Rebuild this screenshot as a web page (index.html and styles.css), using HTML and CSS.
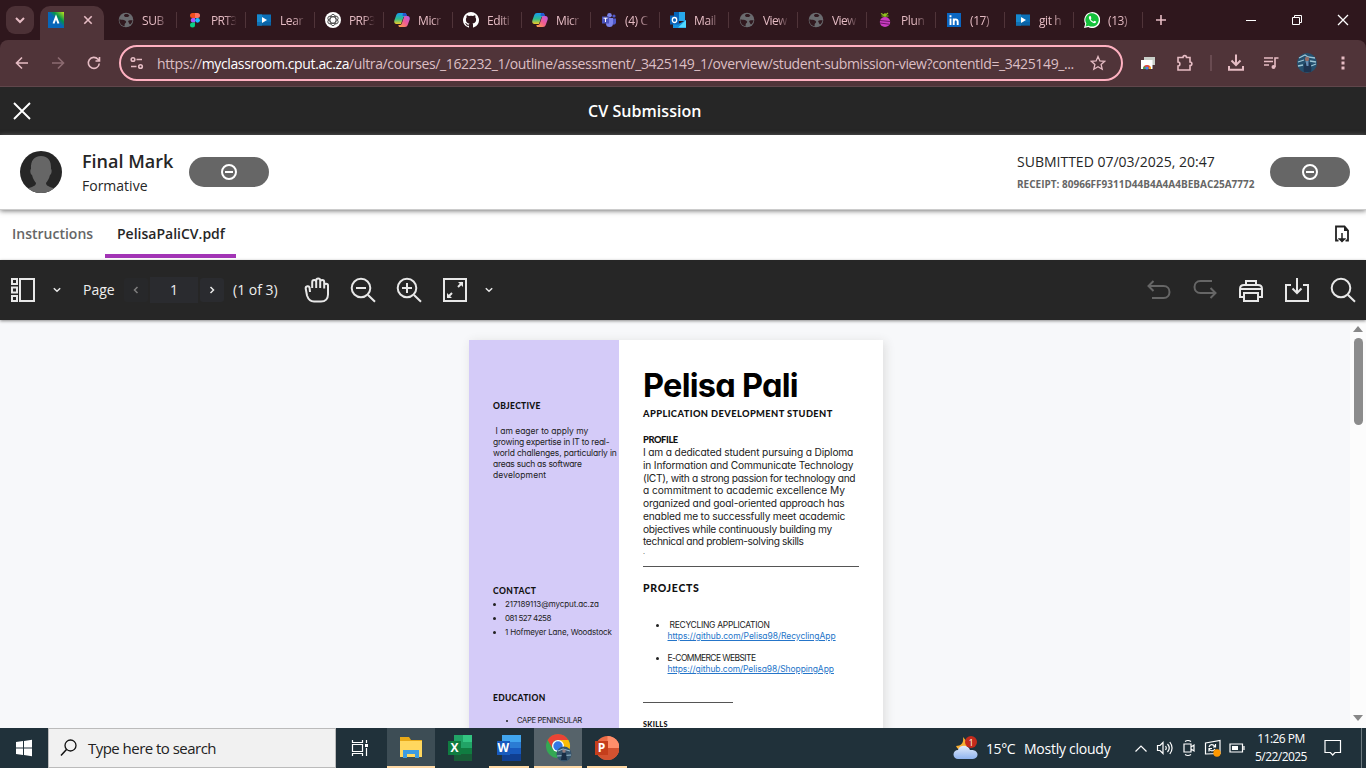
FILE: index.html
```html
<!DOCTYPE html>
<html lang="en">
<head>
<meta charset="utf-8">
<title>CV Submission</title>
<link rel="stylesheet" href="styles.css">
</head>
<body>
<svg class="defs" width="0" height="0">
  <defs>
    <linearGradient id="gA" x1="0" y1="1" x2="1" y2="0"><stop offset=".5" stop-color="#0866b8"/><stop offset=".68" stop-color="#079447"/><stop offset="1" stop-color="#c5e61b"/></linearGradient>
    <linearGradient id="gB" x1="0" y1="0" x2="0" y2="1"><stop offset="0" stop-color="#159df2"/><stop offset=".55" stop-color="#30bd8a"/><stop offset="1" stop-color="#f3cb25"/></linearGradient>
    <linearGradient id="gC" x1="1" y1="0" x2="0" y2="1"><stop offset="0" stop-color="#b65be8"/><stop offset=".5" stop-color="#ef5b93"/><stop offset="1" stop-color="#ffa83f"/></linearGradient>
    <linearGradient id="gD" x1="0" y1="0" x2="0" y2="1"><stop offset="0" stop-color="#e3ecfa"/><stop offset="1" stop-color="#8fb4f0"/></linearGradient>
  </defs>
  <symbol id="globe" viewBox="0 0 16 16"><circle cx="8" cy="8" r="7.300" fill="#6a6b6f"/><path d="M1.500 7.200C4 8 5.500 7.500 7 8.500s1.500 1.800.5 2.500-1 2-.8 3.200C3.500 14 1 11 1.500 7.200zM6.500 2.500c2.500-1 4 0 5 1L10 5H7.500C6 4.500 5.500 3.300 6.500 2.500zM10 9c1.500-1.500 3-.5 4.500-1-.2 2-1.200 3.500-2.500 4.500-1-.8-1.200-2-2-3.500z" fill="#31191f"/></symbol>
  <symbol id="learn" viewBox="0 0 16 16"><path d="M1 2.500h14v11H1z" fill="#0b6fb7"/><path d="M1 2.500h5v11H1z" fill="#1689cf"/><path d="M1 10h14v3.500H1z" fill="#0a5796" opacity=".5"/><path d="M6 5v6l5-3z" fill="#fff"/></symbol>
  <symbol id="copilot" viewBox="0 0 16 16"><path d="M5 1h5.500c1 0 1.500.7 1.800 1.600L13 5H9.500L7 12H2.500C.3 12-.2 10 .5 8l1.800-5C2.800 1.700 3.600 1 5 1z" fill="url(#gB)"/><path d="M10.500 4h3c2.200 0 2.700 2 2 4l-1.800 5c-.5 1.300-1.300 2-2.700 2H6c-1.200 0-1.700-.7-1.500-2H6c1 0 1.500-.5 1.800-1.400L9.800 5.500z" fill="url(#gC)"/><path d="M9 1h2c1 0 1.500 1 2 3H8.500z" fill="#2459cf"/></symbol>
</svg>
<div class="tabstrip">
  <div class="tabsearch"><svg width="12" height="12" viewBox="0 0 12 12"><path d="M2 4l4 4 4-4" class="ln w2"/></svg></div>
  <div class="tab-active">
    <svg width="16" height="16" viewBox="0 0 16 16"><path d="M0 0h16v16H0z" fill="url(#gA)"/><path d="M5.500 11.500 8 5l2.500 6.500" fill="none" stroke="#fff" stroke-width="2"/></svg>
    <svg width="10" height="10" viewBox="0 0 10 10"><path d="M1.300 1.300l7.400 7.400M8.700 1.300 1.300 8.700" class="ln"/></svg>
  </div>
  <div class="tabs">
    <div class="tab"><svg><use href="#globe"/></svg><span>SUB</span></div>
    <div class="tab"><svg viewBox="0 0 16 16"><path d="M5.500 1H8v5H5.500a2.500 2.500 0 010-5z" fill="#f24e1e"/><path d="M8 1h2.500a2.500 2.500 0 010 5H8z" fill="#ff7262"/><path d="M5.500 6H8v4.500H5.500a2.300 2.300 0 010-4.500z" fill="#a259ff"/><circle cx="10.500" cy="8.300" r="2.400" fill="#1abcfe"/><path d="M5.500 10.500H8V13a2.500 2.500 0 11-2.500-2.500z" fill="#0acf83"/></svg><span class="tight">PRT3</span></div>
    <div class="tab"><svg><use href="#learn"/></svg><span>Lear</span></div>
    <div class="tab"><svg viewBox="0 0 16 16"><circle cx="8" cy="8" r="8" fill="#fff"/><g fill="none" stroke="#333" stroke-width=".8"><ellipse cx="8" cy="8" rx="3" ry="5.700"/><ellipse cx="8" cy="8" rx="3" ry="5.700" transform="rotate(60 8 8)"/><ellipse cx="8" cy="8" rx="3" ry="5.700" transform="rotate(120 8 8)"/></g></svg><span class="tight">PRP3</span></div>
    <div class="tab"><svg><use href="#copilot"/></svg><span>Micr</span></div>
    <div class="tab"><svg viewBox="0 0 16 16"><path fill="#fff" d="M8 0a8 8 0 00-2.500 15.600c.4.100.500-.2.500-.4v-1.500c-2.200.5-2.700-1-2.700-1-.4-.9-.9-1.200-.9-1.200-.7-.5.100-.5.100-.5.800.100 1.200.8 1.200.8.700 1.300 1.900.9 2.300.7.100-.5.300-.9.500-1.100-1.800-.2-3.600-.9-3.600-4 0-.9.300-1.600.8-2.100-.1-.2-.4-1 .100-2.100 0 0 .7-.2 2.200.8a7.500 7.500 0 014 0c1.500-1 2.200-.8 2.200-.8.400 1.100.2 1.900.1 2.100.5.600.8 1.300.8 2.100 0 3.100-1.900 3.700-3.600 3.900.3.300.500.8.500 1.500v2.400c0 .2.100.5.500.4A8 8 0 008 0z"/></svg><span>Editi</span></div>
    <div class="tab"><svg><use href="#copilot"/></svg><span>Micr</span></div>
    <div class="tab"><svg viewBox="0 0 16 16"><circle cx="8.500" cy="3.200" r="2.300" fill="#7b83eb"/><circle cx="13" cy="4" r="1.600" fill="#5059c9"/><path d="M5 6h7v5.500a3.500 3.500 0 01-7 0z" fill="#7b83eb"/><path d="M12 6.500h3v4a2.200 2.200 0 01-3 2z" fill="#5059c9"/><path d="M1 4.500h7v7H1z" fill="#4b53bc"/><path d="M2.500 6.200h4M4.500 6v4" stroke="#fff" fill="none"/></svg><span>(4) C</span></div>
    <div class="tab"><svg viewBox="0 0 16 16"><path d="M4 0h11v9H4z" fill="#28a8ea"/><path d="M4 0h5v5H4z" fill="#0364b8"/><path d="M3 8l6.500 3.500L16 8v8H3z" fill="#1490df"/><path d="M16 8 8 15.500h8z" fill="#50d9ff"/><path d="M0 3.500h9v9H0z" fill="#0a62b7"/><ellipse cx="4.500" cy="8" rx="2.200" ry="2.500" fill="none" stroke="#fff" stroke-width="1.300"/></svg><span>Mail</span></div>
    <div class="tab"><svg><use href="#globe"/></svg><span class="tight">View</span></div>
    <div class="tab"><svg><use href="#globe"/></svg><span class="tight">View</span></div>
    <div class="tab"><svg viewBox="0 0 16 16"><path d="M4 1.500 8 3.500l3-2.500M8 1v4M4.500 4h7" stroke="#8fc31f" fill="none" stroke-width="1.200"/><ellipse cx="8" cy="10" rx="5.200" ry="5" fill="#cb3cc2"/><path d="M3 8.500l10 1M3 11l9 1.200" stroke="#6b1767"/></svg><span>Plun</span></div>
    <div class="tab"><svg viewBox="0 0 16 16"><rect x="1" y="1" width="14" height="14" fill="#0a66c2"/><path d="M4.500 6.500V13M4.500 3.300v2M7.700 13V6.500M7.700 10c0-3.400 4-3.400 4-.3V13" fill="none" stroke="#fff" stroke-width="1.900"/></svg><span>(17)</span></div>
    <div class="tab"><svg><use href="#learn"/></svg><span>git h</span></div>
    <div class="tab"><svg viewBox="0 0 16 16"><path d="M0 16l1.200-4.200A8 8 0 114.300 15z" fill="#fff"/><path d="M1.500 14.500l.9-3A6.700 6.700 0 114.700 13.700z" fill="#14c13b"/><path d="M5.700 4c-1.300 1-1 2.500.3 4.300 1.500 2 3.600 3.200 5 2.800 1-.4 1.400-1.300 1-1.600l-1.500-.8-1 1c-1.200-.4-2.300-1.400-2.800-2.500l.7-.9L6.700 4z" fill="#fff"/></svg><span>(13)</span></div>
  </div>
  <svg class="plus" width="12" height="12" viewBox="0 0 12 12"><path d="M6 1v10M1 6h10" class="ln"/></svg>
  <div class="winctl">
    <svg width="12" height="12"><path d="M1 6.500h10" stroke="#fff"/></svg>
    <svg width="12" height="12"><path d="M1.500 3.500h7v7h-7zM3.500 3.500v-2h7v7h-2" fill="none" stroke="#fff"/></svg>
    <svg width="12" height="12"><path d="M1 1l10 10M11 1 1 11" stroke="#fff" stroke-width="1.300"/></svg>
  </div>
</div>
<div class="toolbar">
  <div class="nav">
    <svg width="16" height="16" viewBox="0 0 16 16"><path d="M14 8H3M8 2.500 2.500 8 8 13.500" class="ln"/></svg>
    <svg class="dim" width="16" height="16" viewBox="0 0 16 16"><path d="M2 8h11M8 2.500 13.500 8 8 13.500" class="ln"/></svg>
    <svg width="16" height="16" viewBox="0 0 16 16"><path d="M13.300 8.500A5.500 5.500 0 1112 4.300l1.300 1.500M13.500 2v4h-4" class="ln"/></svg>
  </div>
  <div class="omni">
    <svg width="14" height="14" viewBox="0 0 14 14"><circle cx="3" cy="3.500" r="1.800" class="ln"/><path d="M6.500 3.500H12M1 10.500h5.500" class="ln"/><circle cx="10.500" cy="10.500" r="1.800" class="ln"/></svg>
    <span class="url">https://<b>myclassroom.cput.ac.za</b>/ultra/courses/_162232_1/outline/assessment/_3425149_1/overview/student-submission-view?contentId=_3425149_...</span>
    <svg width="16" height="16" viewBox="0 0 16 16"><path d="M8 1.500l1.900 4.400 4.800.4-3.600 3.200 1.100 4.700L8 11.700l-4.200 2.500 1.100-4.700L1.300 6.300l4.800-.4z" fill="none" stroke="#e6bcc4" stroke-width="1.300"/></svg>
  </div>
  <div class="exts">
    <svg width="16" height="16" viewBox="0 0 16 16"><path d="M4 2h11v8H4z" fill="#c9cfc9"/><path d="M1 5h11.500v9H1z" fill="#fff"/><path d="M3 14a4 4 0 018 0z" fill="#e34133"/><path d="M3 14a4 4 0 011.500-3L6 14z" fill="#34a853"/><path d="M9 14h2a4 4 0 00-1.300-2.900z" fill="#fbbc05"/><circle cx="7" cy="13" r="1.600" fill="#4285f4"/></svg>
    <svg class="puz" width="18" height="18" viewBox="0 0 18 18"><path d="M2 3.500h5c0-2.500 3.500-2.500 3.500 0H14V8c2.500 0 2.500 3.500 0 3.500V16H2v-4c2.500 0 2.500-4 0-4z" class="ln"/></svg>
    <i></i>
    <svg width="18" height="18" viewBox="0 0 18 18"><path d="M9 .5v10M4.500 6.500 9 11l4.500-4.500M2 12v3.800h14V12" class="ln w2"/></svg>
    <svg width="16" height="16" viewBox="0 0 16 16"><path d="M1 3h9M1 6.500h9M1 10h5M12 12V3h3.500" class="ln"/><circle cx="10.500" cy="12" r="2" fill="#e6bcc4"/></svg>
    <svg width="20" height="20" viewBox="0 0 20 20"><circle cx="10" cy="10" r="10" fill="#24506f"/><path d="M2 5l6-3 3 2 7 1M1 9l6-2M13 8l6 1M1 13l5-1M14 13l5-2" stroke="#9dc4d4" stroke-width="1.300" fill="none"/><path d="M7 19c-1-4 0-9 2-10h3c2 1 3 6 2 10z" fill="#1d3451"/><path d="M8.500 8h3v5h-2z" fill="#668eb5"/><circle cx="10" cy="6" r="2.200" fill="#936c66"/></svg>
    <svg class="dots" width="4" height="16" viewBox="0 0 4 16"><path d="M.5 1.500h3v3h-3zM.5 6.500h3v3h-3zM.5 11.500h3v3h-3z" fill="#e6bcc4"/></svg>
  </div>
</div>
<header class="title"><svg width="20" height="20" viewBox="0 0 20 20"><path d="M2 2l16 16M18 2 2 18" stroke="#fff" stroke-width="1.900"/></svg><h1>CV Submission</h1></header>
<section class="info">
  <svg class="avatar" width="42" height="42" viewBox="0 0 42 42"><clipPath id="av"><circle cx="21" cy="21" r="21"/></clipPath><g clip-path="url(#av)"><path d="M0 0h42v42H0z" fill="#262626"/><path d="M21 5c7 0 10.500 5 10 13 1 .5 1 5-1 6-1 4-2.500 6-4 8 0 3 4 4 9 5.500V42H7v-4.500C12 36 16 35 16 32c-1.500-2-3-4-4-8-2-1-2-5.500-1-6C10.500 10 14 5 21 5z" fill="#666"/></g></svg>
  <div class="mark"><strong>Final Mark</strong><span>Formative</span></div>
  <div class="pill"><svg width="16" height="16" viewBox="0 0 16 16"><circle cx="8" cy="8" r="7" /><path d="M4 8h8"/></svg></div>
  <div class="receipt"><span>SUBMITTED 07/03/2025, 20:47</span><b>RECEIPT: 80966FF9311D44B4A4A4BEBAC25A7772</b></div>
  <div class="pill"><svg width="16" height="16" viewBox="0 0 16 16"><circle cx="8" cy="8" r="7"/><path d="M4 8h8"/></svg></div>
</section>
<nav class="doctabs"><span class="t1">Instructions</span><span class="t2">PelisaPaliCV.pdf</span><svg width="16" height="18" viewBox="0 0 16 18"><path d="M4.500 15.500H2v-14h8.500l3.500 4v10h-2.500" fill="none" stroke="#222" stroke-width="1.800"/><path d="M10 1v5h4.500z" fill="#222"/><path d="M8 8v8M5.500 14l2.500 2.500 2.500-2.500z" fill="#222" stroke="#222" stroke-width="1.500"/></svg></nav>
<div class="pdfbar">
  <svg class="p1" width="24" height="24" viewBox="0 0 24 24"><path d="M1 1h5v5H1zM1 9.500h5v5H1zM1 18h5v5H1zM9 1h14v22H9z"/></svg>
  <svg class="chev" width="8" height="6" viewBox="0 0 8 6"><path d="M.8 1.200 4 4.300l3.200-3.100"/></svg>
  <span class="pg">Page</span>
  <div class="step l"><svg width="6" height="8" viewBox="0 0 6 8"><path d="M4.500 1 1.500 4l3 3"/></svg></div>
  <div class="num">1</div>
  <div class="step"><svg width="6" height="8" viewBox="0 0 6 8"><path d="M1.500 1l3 3-3 3"/></svg></div>
  <span class="of">(1 of 3)</span>
  <svg class="hand" width="26" height="26" viewBox="0 0 26 26"><path d="M6 15 5.500 10.500C5 8.500 1.500 9 1.700 11.500L3 18.500C4.500 23 7 24.500 10 24.500h7c4.500 0 7-3 7-7V8.500c0-2.500-3.800-2.500-3.800 0v3V5c0-2.700-4-2.700-4 0v6-7.500c0-2.700-4-2.700-4 0V11 5c0-2.700-4-2.700-4 0v6"/></svg>
  <svg class="tool" width="26" height="26" viewBox="0 0 26 26"><circle cx="11" cy="11" r="9.300"/><path d="M18 18l7 6.700M6 11h10"/></svg>
  <svg class="tool" width="26" height="26" viewBox="0 0 26 26"><circle cx="11" cy="11" r="9.300"/><path d="M18 18l7 6.700M6 11h10M11 6v10"/></svg>
  <svg class="tool fit" width="24" height="24" viewBox="0 0 24 24"><path d="M1 1h22v22H1zM4.500 19.500 9 15M15 9l4.500-4.500"/><path d="M4 15v5h5zM15 4h5v5z" class="fill"/></svg>
  <svg class="chev" width="8" height="6" viewBox="0 0 8 6"><path d="M.8 1.200 4 4.300l3.200-3.100"/></svg>
  <div class="right">
    <svg class="off" width="24" height="20" viewBox="0 0 24 20"><path d="M6.500 1 1.500 6l5 5M2 6h14.500c8 0 8 12 0 12H5"/></svg>
    <svg class="off" width="24" height="20" viewBox="0 0 24 20"><path d="M17.500 8l5 5-5 5M22 13H7.500c-8 0-8-12 0-12H19"/></svg>
    <svg width="24" height="24" viewBox="0 0 24 24"><path d="M7 6.500V3h10v3.500M5 19H1v-8c0-3 1-4 4-4h14c3 0 4 1 4 4v8h-4M1 11h22M5 15h14v8H5z"/></svg>
    <svg width="24" height="24" viewBox="0 0 24 24"><path d="M6 7H1v16h22V7h-5M12 0v14.500M7.500 10.500 12 15l4.500-4.500"/></svg>
    <svg class="find" width="26" height="26" viewBox="0 0 26 26"><circle cx="11" cy="11" r="9.300"/><path d="M18 18l7 6.700"/></svg>
  </div>
</div>
<main class="viewer">
  <article class="page">
    <aside class="side">
      <h3 class="objh">OBJECTIVE</h3>
      <p class="obj"><span class="o1">I am eager to apply my</span><span class="o2">growing expertise in IT to real-</span><span class="o3">world challenges, particularly in</span><span class="o4">areas such as software</span><span class="o5">development</span></p>
      <h3 class="conh">CONTACT</h3>
      <ul class="con"><li class="c1">217189113@mycput.ac.za</li><li class="c2">081 527 4258</li><li class="c3">1 Hofmeyer Lane, Woodstock</li></ul>
      <h3 class="eduh">EDUCATION</h3>
      <ul class="edu"><li>CAPE PENINSULAR<br>UNIVERSITY OF</li></ul>
    </aside>
    <div class="body">
      <h1>Pelisa Pali</h1>
      <h2>APPLICATION DEVELOPMENT STUDENT</h2>
      <h4>PROFILE</h4>
      <p class="profile"><span class="l1">I am a dedicated student pursuing a Diploma</span><span class="l2">in Information and Communicate Technology</span><span class="l3">(ICT), with a strong passion for technology and</span><span class="l4">a commitment to academic excellence My</span><span class="l5">organized and goal-oriented approach has</span><span class="l6">enabled me to successfully meet academic</span><span class="l7">objectives while continuously building my</span><span class="l8">technical and problem-solving skills</span></p>
      <div class="dot">.</div>
      <hr>
      <h3>PROJECTS</h3>
      <ul class="proj"><li><span class="indent r1">RECYCLING APPLICATION</span><a class="r2">https://github.com/Pelisa98/RecyclingApp</a></li><li><span class="r3">E-COMMERCE WEBSITE</span><a class="r4">https://github.com/Pelisa98/ShoppingApp</a></li></ul>
      <hr class="short">
      <h5>SKILLS</h5>
    </div>
  </article>
  <div class="scroll"><i class="up"></i><b></b><i class="down"></i></div>
</main>
<footer class="taskbar">
  <div class="start"><svg width="16" height="18" viewBox="0 0 16 18"><path d="M0 3l7-1v6.500H0zM8 1.900 16 .7v7.800H8zM0 9.500h7V16l-7-1zM8 9.500h8v7.800L8 16.100z" fill="#fff"/></svg></div>
  <div class="search"><svg width="17" height="18" viewBox="0 0 17 18"><circle cx="10.500" cy="6.500" r="5.500" fill="none" stroke="#111" stroke-width="1.300"/><path d="M6.500 10.500 1 16.500" stroke="#111" stroke-width="1.500"/></svg><span>Type here to search</span></div>
  <svg class="tv" width="18" height="18" viewBox="0 0 18 18"><path d="M1.500 1v2.500h10V1M1.500 17v-2.500h10V17M1.500 5.500h10v7h-10zM15.500 1v3M15.500 9v8" fill="none" stroke="#fff" stroke-width="1.200"/><path d="M14 5h3v3h-3z" fill="#fff"/></svg>
  <div class="app ex"><svg width="24" height="24" viewBox="0 0 24 24"><path d="M1 2h9l2 3h11v17H1z" fill="#e8a918"/><path d="M1 6h22v16H1z" fill="#ffd75e"/><path d="M4 23v-8h16v8h-4v-4H8v4z" fill="#3c9be0"/></svg></div>
  <div class="app"><svg width="24" height="26" viewBox="0 0 24 26"><path d="M6 0h18v26H6z" fill="#21a366"/><path d="M15 0h9v7h-9z" fill="#33c481"/><path d="M6 13h18v13H6z" fill="#107c41"/><path d="M6 19h18v7H6z" fill="#185c37"/><path d="M0 6h13v14H0z" fill="#107c41"/><text x="2.500" y="17" class="ltr">X</text></svg></div>
  <div class="app un wd"><svg width="24" height="26" viewBox="0 0 24 26"><path d="M5 0h19v26H5z" fill="#41a5ee"/><path d="M5 7h19v19H5z" fill="#2b7cd3"/><path d="M5 13h19v13H5z" fill="#185abd"/><path d="M5 19h19v7H5z" fill="#103f91"/><path d="M0 6h13v14H0z" fill="#185abd"/><text x=".5" y="17" class="ltr">W</text></svg></div>
  <div class="app chrome"><svg width="28" height="30" viewBox="0 0 28 30"><circle cx="13" cy="14" r="12" fill="#34a853"/><path d="M23.400 8H13l5 9-5 9A12 12 0 0023.400 8z" fill="#fbbc05"/><path d="M2.600 8A12 12 0 0123.400 8H13a6 6 0 00-5.200 9z" fill="#ea4335"/><circle cx="13" cy="14" r="6" fill="#fff"/><circle cx="13" cy="14" r="4.700" fill="#3478e5"/><circle cx="19" cy="22" r="7.500" fill="#35546d"/><path d="M13 19l5-2 7 2M12 24l14-1" stroke="#99bccf" fill="none"/><circle cx="19" cy="19" r="1.700" fill="#987e80"/><path d="M17 21h4l1 7h-6z" fill="#182d45"/></svg></div>
  <div class="app un pp"><svg width="24" height="26" viewBox="0 0 24 26"><circle cx="12.500" cy="13" r="12" fill="#ed6c47"/><path d="M12.500 1a12 12 0 0112 12h-12z" fill="#ff8f6b"/><path d="M.5 13h24a12 12 0 01-24 0z" fill="#d35230"/><path d="M0 6h13v14H0z" fill="#c43e1c"/><text x="2.700" y="17" class="ltr">P</text></svg></div>
  <div class="tray">
    <svg width="26" height="24" viewBox="0 0 26 24"><path d="M10 1c1 6-2 9-7 9 3 7 13 5 12-3z" fill="#f8ae30"/><path d="M5 23a4.500 4.500 0 010-9c1-5 10-6 12 0 10-1 9 9 3 9z" fill="url(#gD)"/><circle cx="18" cy="6" r="6" fill="#c42b1c"/><text x="15.800" y="9.500" class="badge">1</text></svg>
    <span class="deg">15°C</span><span class="wea">Mostly cloudy</span>
    <svg class="up" width="14" height="9" viewBox="0 0 14 9"><path d="M1.500 7.500 7 2l5.500 5.500"/></svg>
    <svg class="snd" width="18" height="16" viewBox="0 0 18 16"><path d="M1.500 5.500H4L7 2.500v11L4 10.500H1.500zM9.500 6q1.500 2 0 4M11.500 4q3.500 4 0 8M13.800 2q4.500 6 0 12"/></svg>
    <svg class="cam" width="12" height="18" viewBox="0 0 12 18"><path d="M1 5h7v8H1zM8 8l3-2v6l-3-2M2 2.500q3-2 6 0M2 15.500q3 2 6 0"/></svg>
    <svg class="syn" width="18" height="18" viewBox="0 0 18 18"><path d="M1.500 4 16 1.500v13L1.500 15zM5 8c1-3 4-3 6-.5M11.500 5v3H9M11 10c-2 2.500-4 2.500-6 0M5 12.500v-3h3"/><circle cx="13" cy="14" r="3.700" fill="#ff9800" stroke="none"/></svg>
    <svg class="bat" width="16" height="10" viewBox="0 0 16 10"><path d="M1 1h12.500v8H1zM15 3v4"/><path d="M3 3h6v4H3z" fill="#fff" stroke="none"/></svg>
    <div class="clock"><span>11:26 PM</span><span>5/22/2025</span></div>
    <svg class="not" width="18" height="18" viewBox="0 0 18 18"><path d="M1 1.500h15.500v12H11L8.700 16l-2.300-2.500H1z"/></svg>
    <i></i>
  </div>
</footer>
</body>
</html>
```
FILE: styles.css
```css
*{box-sizing:border-box}
html,body{margin:0;height:768px;overflow:hidden}
body{width:1366px;font-family:"Open Sans","Noto Sans",sans-serif;display:flex;flex-direction:column;background:#f7f8fa;color:#262626}
svg{display:block;flex:none}
.defs{position:absolute}
h1,h2,h3,h4,h5,p,ul{margin:0;padding:0;list-style:none}
.ln{fill:none;stroke:#e6bcc4;stroke-width:1.600}
.w2{stroke-width:2}
.tabstrip{height:40px;flex:none;background:#2f171d;display:flex}
.tabsearch{width:28px;height:28px;margin:6px 6px 0;border-radius:9px;background:#4c3136;display:flex;align-items:center;justify-content:center}
.tabstrip>.tab-active{width:64px;height:34px;margin-top:6px;border-radius:10px 10px 0 0;background:#503439;display:flex;align-items:center;justify-content:space-between;padding:0 11px 6px 8px}
.tabs{display:flex;margin-left:4px}
.tab{width:69px;height:16px;margin-top:12px;padding-left:10px;border-right:1px solid #503439;display:flex;align-items:center;gap:8px}
.tab svg{width:16px;height:16px}
.tab span{width:28px;white-space:nowrap;font-size:12px;line-height:18px;padding-top:2px;letter-spacing:-.4px;color:#e6bcc4;-webkit-mask-image:linear-gradient(90deg,#000 50%,transparent 92%)}
.tab .tight{letter-spacing:-.6px}
.plus{margin:14px 0 0 12px}
.winctl{display:flex;gap:34px;margin:14px 17px 0 auto}
.toolbar{height:47px;flex:none;background:#503439;border-bottom:1px solid #60464b;border-radius:8px 8px 0 0;box-shadow:0 -8px 0 #2f171d;display:flex;align-items:center}
.tabstrip{position:relative;z-index:1;clip-path:inset(0)}
.nav{display:flex;gap:20px;margin-left:14px;width:105px;flex:none}
.dim{opacity:.4}
.omni{width:1004px;flex:none;height:36px;border:2px solid #ffb1c1;border-radius:18px;display:flex;align-items:center;padding:0 15px 0 9px}
.url{flex:1;margin-left:13px;font-size:14px;letter-spacing:-.375px;white-space:nowrap;color:#dcbfc4}
.url b{font-weight:400;color:#fff}
.exts{display:flex;align-items:center;margin-left:17px;gap:19px}
.exts i{width:2px;height:16px;background:#694b51;margin:0 -3px 0 -3px}
.exts svg:nth-child(n+4){margin-left:-1px}
.exts .puz{margin-left:1px}
.exts svg.dots:last-child{margin-left:5px}
.title{height:48px;flex:none;background:#262626;display:flex;align-items:center;padding-left:12px}
.title h1{margin-left:556px;color:#fff;font-size:16px;font-weight:600;letter-spacing:.05px;white-space:nowrap}
.info{height:75px;flex:none;background:#fff;display:flex;align-items:center;padding:0 16px 0 20px;box-shadow:0 1px 5px #777;position:relative;border-bottom:1px solid #ccc}
.mark{margin-left:20px;display:flex;flex-direction:column;width:107px;padding-top:3px}
.mark strong{font-size:18px;font-weight:600;line-height:25px;white-space:nowrap}
.mark span{font-size:14px;line-height:24px}
.pill{width:80px;height:30px;border-radius:15px;background:#666;display:flex;align-items:center;justify-content:center}
.pill svg{fill:none;stroke:#fff;stroke-width:2}
.receipt{margin-left:auto;margin-right:16px;width:237px;display:flex;flex-direction:column;white-space:nowrap}
.receipt span{font-size:14px;line-height:24px}
.receipt b{font-size:10px;line-height:20px;color:#666}
.doctabs{height:50px;flex:none;background:#fff;display:flex;font-size:14px;font-weight:600;line-height:48px;white-space:nowrap}
.t1{width:105px;padding-left:12px;color:#666}
.t2{width:131px;padding-left:12px;height:48px;border-bottom:4px solid #a234b5}
.doctabs svg{margin:15px 16px 0 auto}
.pdfbar{height:60px;flex:none;background:#262626;display:flex;align-items:center;color:#eee;font-size:14px;padding:0 10px 0 11px;box-shadow:0 1px 3px #888;position:relative;white-space:nowrap}
.pdfbar svg{fill:none;stroke:#e8e8e8;stroke-width:2}
.pdfbar .fill{fill:#e8e8e8;stroke:none}
.chev{margin-left:18px}
.pdfbar .chev{stroke-width:1.500}
.pg{margin-left:22px;width:41px;padding-bottom:1px}
.step{width:24px;height:24px;background:#2a2b2f;border-radius:3px;display:flex;align-items:center;justify-content:center}
.step.l{opacity:.45}
.step svg{stroke-width:1.500}
.num{width:48px;height:26px;background:#2a2b2f;margin:0 2px;text-align:center;line-height:26px}
.of{margin-left:9px;width:71px;padding-bottom:1px}
.tool{margin-left:20px}
.tool.fit{margin-left:21px}
.right{margin-left:auto;display:flex;align-items:center;gap:22px}
.right .off{stroke:#666}
.right .find{margin-left:-1px}
.viewer{height:408px;flex:none;display:flex;padding-left:469px;background:#f7f8fa;overflow:hidden}
.page{width:414px;height:420px;margin-top:20px;background:#fff;box-shadow:2px 2px 10px #ddd;display:flex;font-family:Inter,sans-serif;font-feature-settings:"cv11";color:#222;white-space:nowrap}
.side{width:150px;background:#d4cbf8;padding:60px 0 0 24px;font-size:8.500px}
.side h3,.body h2,.body h3,.body h4,.body h5{font-family:Lato,sans-serif;font-weight:900;color:#111}
.side h3{font-size:8.500px;line-height:11px;letter-spacing:.3px}
.side .objh{margin-top:1px}
.obj{margin-top:14px;line-height:11px}
.obj span,.profile span{display:block;width:max-content}
.obj .o1{margin-left:2.500px}
.o2{letter-spacing:-.22px}.o3{letter-spacing:-.16px}.o4{letter-spacing:-.27px}.o5{letter-spacing:.1px}
.side .conh{margin-top:105px;letter-spacing:.5px}
.con{margin-top:0;line-height:14px;font-size:8px}
.con li,.edu li{display:list-item;list-style:disc;margin-left:12px}
.c1{letter-spacing:-.12px}.c2{letter-spacing:-.5px}.c3{letter-spacing:-.16px}
.side .eduh{margin-top:54px}
.edu{margin:11px 0 0 12px;font-size:7.700px;line-height:11px;letter-spacing:-.4px}
.body{padding:26px 0 0 24px;width:264px}
.body h1{font-size:32.500px;line-height:40px;font-weight:700;color:#000;letter-spacing:-.75px}
.body h2{font-size:9.300px;line-height:14px;margin-top:1px;letter-spacing:.4px}
.body h4{font-size:9.300px;line-height:13px;margin-top:12px;letter-spacing:-.4px}
.profile{font-size:10.200px;line-height:12.750px}
.l1{letter-spacing:-.16px}.l2{letter-spacing:-.17px}.l3{letter-spacing:-.33px}.l4{letter-spacing:-.05px}.l5{letter-spacing:-.17px}.l6{letter-spacing:-.19px}.l7{letter-spacing:-.27px}.l8{letter-spacing:-.36px}
.dot{font-size:7px;line-height:8px;margin-top:0;color:#555}
hr{border:0;border-top:1px solid #555;margin:10px 0 0;width:216px}
.body h3{font-size:10.500px;line-height:14px;margin-top:14px;letter-spacing:.7px}
.proj{margin:25px 0 0 24.500px;font-size:8.500px;line-height:11px;height:66px}
.proj li{list-style:disc;height:33px}
.proj span,.proj a{display:block;width:max-content}
.proj a{color:#2575c9;text-decoration:underline}
.r1{letter-spacing:-.3px}.r2{letter-spacing:-.04px}.r3{letter-spacing:-.6px}.r4{letter-spacing:-.07px}
.indent{margin-left:2px}
.short{width:90px;margin-top:16px}
.body h5{font-size:7.300px;line-height:10px;margin-top:17px;letter-spacing:.3px}
.scroll{margin-left:auto;width:16px;background:#fcfcfc;display:flex;flex-direction:column;align-items:center}
.scroll b{width:9px;height:87px;border-radius:5px;background:#8c8c8c;margin:6px 0 auto}
.scroll i{border:5px solid transparent;width:0;height:0}
.scroll .up{border-bottom:6px solid #888;border-top:0;margin-top:6px}
.scroll .down{border-top:6px solid #888;border-bottom:0;margin-bottom:7px}
.taskbar{height:40px;flex:none;background:#20313a;display:flex;align-items:center;color:#fff;position:relative}
.start{width:48px;padding-left:16px}
.search{width:288px;height:40px;background:#f1f1f1;border:1px solid #bbb;display:flex;align-items:center;padding-left:11px;gap:11px;color:#222;font-size:15px;letter-spacing:-.53px}
.tv{margin:0 18px 0 15px}
.app{width:48px;height:40px;margin-right:1px;display:flex;align-items:center;justify-content:center}
.ex{background:#3d4d55;border-bottom:2px solid #ffd9a5;margin-right:1px}
.un{width:40px;border-bottom:2px solid #ffd9a5;margin:0 5px 0 4px}
.un svg{margin-top:2px}
.chrome{background:#56636a;border-bottom:2px solid #ffd9a5;margin-right:5px}
.chrome svg{margin-left:2px}
.un.pp{margin:0}
.ltr{font:bold 12px "Open Sans",sans-serif;fill:#fff}
.badge{font:8.500px "Open Sans",sans-serif;fill:#fff}
.tray{margin-left:auto;display:flex;align-items:center;font-size:14px;width:413px;white-space:nowrap;height:40px}
.deg{width:38px;margin-left:7px;letter-spacing:-.4px}
.wea{width:110px;letter-spacing:-.25px}
.tray .up,.snd,.cam,.syn,.bat,.not{fill:none;stroke:#fff;stroke-width:1.200}
.snd{margin-left:8px}.cam{margin-left:9px}.syn{margin-left:9px}.bat{margin-left:7px}
.clock{width:60px;margin-left:6px;display:flex;flex-direction:column;text-align:center;font-size:12px;line-height:18px;letter-spacing:-.55px}
.not{margin-left:13px}
.tray i{width:1px;height:40px;background:#6d7a80;margin-left:auto;margin-right:4px}
```
